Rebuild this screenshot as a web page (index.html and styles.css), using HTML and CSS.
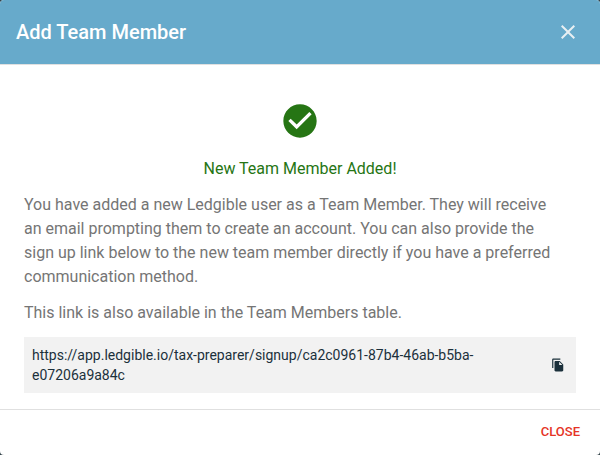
FILE: index.html
```html
<!DOCTYPE html>
<html lang="en">
<head>
<meta charset="utf-8">
<title>Add Team Member</title>
<meta name="viewport" content="width=device-width">
<link rel="stylesheet" href="styles.css">
</head>
<body>
<div class="dialog" role="dialog" aria-labelledby="dialog-title">
	<header class="dialog-header">
		<h1 id="dialog-title">Add Team Member</h1>
		<button class="icon-button dismiss" type="button" aria-label="Dismiss">
			<svg viewBox="0 0 24 24" width="24" height="24"><path d="M19 6.41 17.59 5 12 10.59 6.41 5 5 6.41 10.59 12 5 17.59 6.41 19 12 13.41 17.59 19 19 17.59 13.41 12z"/></svg>
		</button>
	</header>
	<main class="dialog-body">
		<div class="success">
			<svg viewBox="0 0 24 24" width="40" height="40" aria-hidden="true"><path d="M12 2C6.5 2 2 6.5 2 12s4.500 10 10 10 10-4.500 10-10S17.500 2 12 2M10 17l-5-5 1.410-1.410L10 14.170l7.590-7.590L19 8l-9 9z"/></svg>
			<p>New Team Member Added!</p>
		</div>
		<p class="message">You have added a new Ledgible user as a Team Member. They will receive an email prompting them to create an account. You can also provide the sign up link below to the new team member directly if you have a preferred communication method.</p>
		<p class="message">This link is also available in the Team Members table.</p>
		<div class="link-box">
			<span class="link">https://app.ledgible.io/tax-preparer/signup/ca2c0961-87b4-46ab-b5ba-e07206a9a84c</span>
			<button class="icon-button copy" type="button" aria-label="Copy link">
				<svg viewBox="0 0 24 24" width="14" height="14"><path d="M16 1H4c-1.100 0-2 .9-2 2v14h2V3h12V1zm-1 4 6 6v10c0 1.100-.9 2-2 2H7.990C6.890 23 6 22.100 6 21l.010-14c0-1.100.890-2 1.990-2h7zm-1 7h5.500L14 6.500V12z"/></svg>
			</button>
		</div>
	</main>
	<footer class="dialog-footer">
		<button class="close" type="button">CLOSE</button>
	</footer>
</div>
</body>
</html>
```
FILE: styles.css
```css
* {
	box-sizing:border-box;
}
body {
	margin:0;
	background:#34444b;
	font:400 16px/24px Roboto, "Liberation Sans", sans-serif;
}
h1,
p {
	margin:0;
}
button {
	padding:0;
	border:0;
	background:none;
	color:inherit;
	font-family:inherit;
	cursor:pointer;
}
svg {
	display:block;
	fill:currentColor;
}
.dialog {
	display:flex;
	flex-direction:column;
	min-height:100vh;
	background:#fff;
	border-radius:4px;
	overflow:hidden;
}
.dialog-header {
	display:flex;
	align-items:center;
	justify-content:space-between;
	padding:16px 20px 16px 16px;
	border-bottom:1px solid #e0e0e0;
	background:#67aacb;
	color:#fff;
}
.dialog-header h1 {
	font-size:20px;
	font-weight:500;
	line-height:32px;
}
.dismiss {
	color:#e8eff3;
}
.dialog-body {
	padding:36px 24px 16px;
}
.success {
	display:flex;
	flex-direction:column;
	align-items:center;
	gap:16px;
	margin-bottom:12px;
	color:#267514;
}
.message {
	margin-bottom:12px;
	padding-right:20px;
	color:#757575;
}
.link-box {
	display:flex;
	align-items:center;
	justify-content:space-between;
	gap:48px;
	padding:8px 11px 8px 8px;
	background:#f2f2f2;
	color:#1b303b;
}
.link {
	font-size:14px;
	line-height:20px;
}
.dialog-footer {
	display:flex;
	flex:1;
	align-items:flex-start;
	justify-content:flex-end;
	padding:8px 20px;
	border-top:1px solid #e0e0e0;
}
.close {
	color:#e53426;
	font-size:13px;
	font-weight:500;
	line-height:28px;
}
```
